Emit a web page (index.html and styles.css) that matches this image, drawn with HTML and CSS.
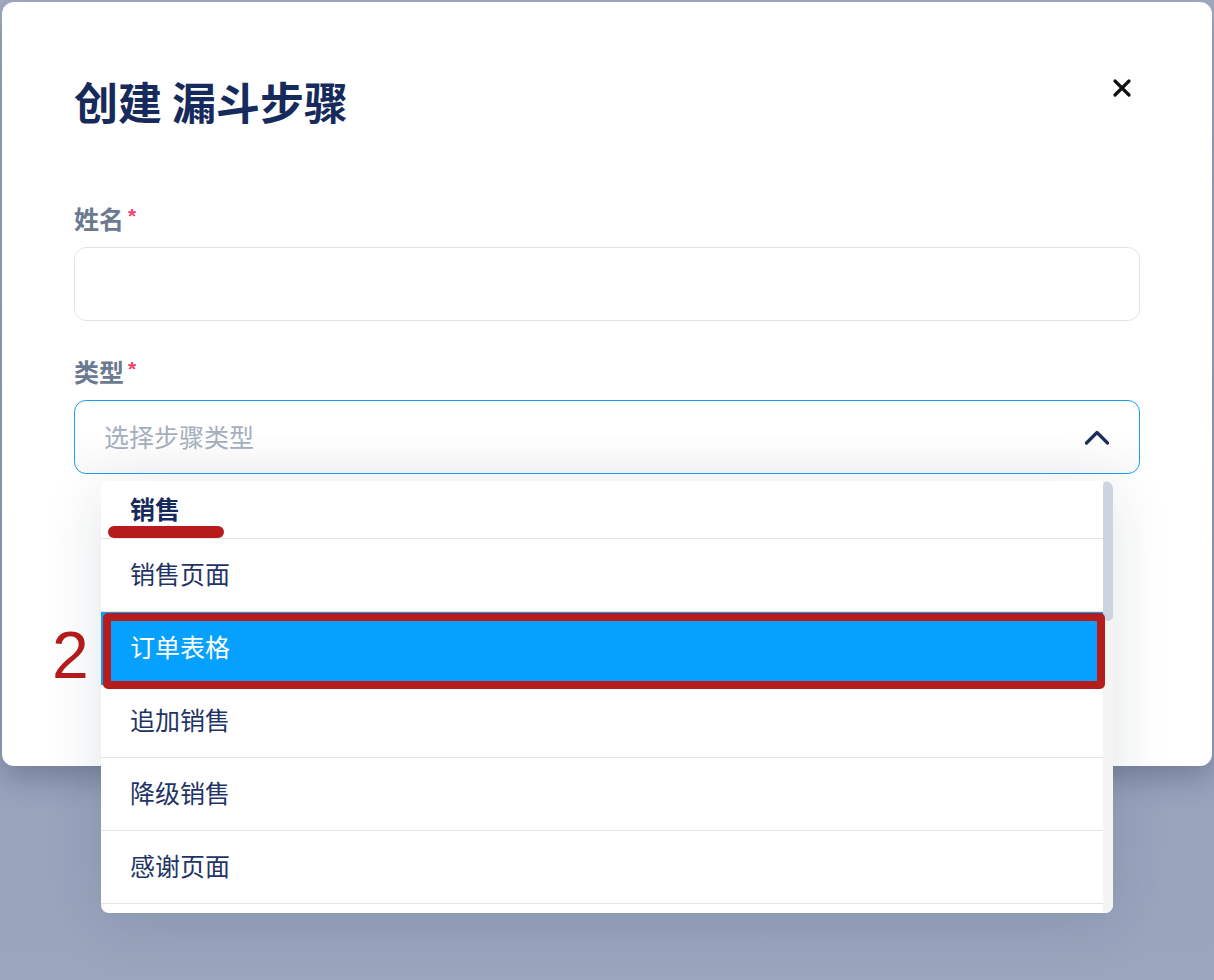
FILE: index.html
```html
<!DOCTYPE html>
<html lang="zh-CN">
<head>
<meta charset="utf-8">
<title>创建 漏斗步骤</title>
<link rel="stylesheet" href="styles.css">
</head>
<body>
<div class="page">
  <div class="modal">
    <div class="modal-header">
      <h1 class="title">创建 漏斗步骤</h1>
      <button class="close" aria-label="关闭">
        <svg width="20" height="20" viewBox="0 0 20 20"><path d="M3 3 L17 17 M17 3 L3 17" stroke="#111" stroke-width="3.2" stroke-linecap="round" fill="none"/></svg>
      </button>
    </div>

    <div class="field field-first">
      <label class="label">姓名<span class="req">*</span></label>
      <div class="input"></div>
    </div>

    <div class="field field-second">
      <label class="label">类型<span class="req">*</span></label>
      <div class="select-wrap">
        <div class="select">
          <span class="placeholder">选择步骤类型</span>
          <svg class="chevron" width="26" height="16" viewBox="0 0 26 16"><polyline points="2.5,14 13,3.5 23.5,14" stroke="#1b2d5e" stroke-width="3.2" stroke-linecap="round" stroke-linejoin="round" fill="none"/></svg>
        </div>
        <div class="dropdown">
          <div class="list">
            <div class="group">销售</div>
            <div class="item">销售页面</div>
            <div class="item selected">订单表格</div>
            <div class="item">追加销售</div>
            <div class="item">降级销售</div>
            <div class="item">感谢页面</div>
            <div class="item"></div>
          </div>
          <div class="scrollbar"><div class="thumb"></div></div>
          <div class="mark-underline"></div>
          <div class="mark-box"></div>
        </div>
      </div>
    </div>

    <div class="step-num">2</div>
  </div>
</div>
</body>
</html>
```

FILE: styles.css
```css
html, body {
  margin: 0;
  padding: 0;
}
body {
  width: 1214px;
  height: 980px;
  overflow: hidden;
  background: linear-gradient(180deg, #a3acc2 0%, #97a2bb 60%, #9aa5be 100%);
  font-family: "Noto Sans CJK SC", "Noto Sans", sans-serif;
}
.page {
  padding: 2px;
}
.modal {
  position: relative;
  box-sizing: border-box;
  width: 1210px;
  height: 764px;
  background: #ffffff;
  border-radius: 12px;
  padding: 72px 72px 0 72px;
  box-shadow: 0 12px 30px rgba(45, 55, 85, 0.35);
}
.modal-header {
  display: flex;
  justify-content: space-between;
  align-items: flex-start;
}
.title {
  margin: 0;
  font-size: 44px;
  line-height: 54px;
  font-weight: 700;
  color: #172a5c;
}
.close {
  width: 40px;
  height: 40px;
  margin-top: -6px;
  margin-right: -2px;
  padding: 0;
  border: none;
  background: transparent;
  display: flex;
  align-items: center;
  justify-content: center;
}
.field-first {
  margin-top: 74px;
}
.field-second {
  margin-top: 34px;
}
.label {
  display: block;
  font-size: 25px;
  line-height: 32px;
  font-weight: 700;
  color: #6b7a90;
  margin-bottom: 13px;
}
.req {
  display: inline-block;
  margin-left: 4px;
  font-family: "Liberation Sans", sans-serif;
  font-size: 21px;
  line-height: 20px;
  vertical-align: top;
  position: relative;
  top: 4px;
  font-weight: 700;
  color: #f2416a;
}
.input {
  box-sizing: border-box;
  height: 74px;
  border: 1px solid #e1e4e9;
  border-radius: 12px;
  background: #fff;
}
.select-wrap {
  position: relative;
}
.select {
  box-sizing: border-box;
  height: 74px;
  border: 1px solid #1c9df2;
  border-radius: 12px;
  padding: 0 29px;
  display: flex;
  align-items: center;
  justify-content: space-between;
  background: linear-gradient(180deg, #ffffff 40%, #f9f9fa 100%);
}
.placeholder {
  font-size: 25px;
  color: #a4aebe;
  padding-bottom: 2px;
}
.chevron {
  display: block;
}
.dropdown {
  position: absolute;
  top: 81px;
  left: 27px;
  width: 1012px;
  height: 432px;
  background: #fff;
  border-radius: 8px;
  overflow: hidden;
  display: flex;
  box-shadow: 0 10px 60px rgba(20, 30, 60, 0.12);
  z-index: 2;
}
.list {
  flex: 1;
}
.group {
  box-sizing: border-box;
  height: 58px;
  padding-left: 29px;
  padding-bottom: 4px;
  display: flex;
  align-items: center;
  border-bottom: 1px solid #e3e5e9;
  font-size: 25px;
  font-weight: 700;
  color: #15295a;
}
.item {
  box-sizing: border-box;
  height: 73px;
  padding-left: 29px;
  padding-bottom: 5px;
  display: flex;
  align-items: center;
  border-bottom: 1px solid #e3e5e9;
  font-size: 25px;
  color: #1f3466;
}
.item.selected {
  background: #06a1ff;
  color: #ffffff;
  border-bottom-color: #06a1ff;
}
.scrollbar {
  width: 10px;
  background: #f4f4f5;
  position: relative;
}
.thumb {
  width: 10px;
  height: 140px;
  border-radius: 5px;
  background: #cdd3df;
}
.mark-underline {
  position: absolute;
  left: 7px;
  top: 45px;
  width: 116px;
  height: 12px;
  border-radius: 6px;
  background: #b71c1c;
}
.mark-box {
  position: absolute;
  left: 2px;
  top: 132px;
  width: 1002px;
  height: 76px;
  box-sizing: border-box;
  border: 8px solid #b71c1c;
  border-radius: 5px;
}
.step-num {
  position: absolute;
  left: 50px;
  top: 620px;
  font-family: "Liberation Sans", "Arial", sans-serif;
  font-size: 66px;
  line-height: 66px;
  color: #b71c1c;
}
```
